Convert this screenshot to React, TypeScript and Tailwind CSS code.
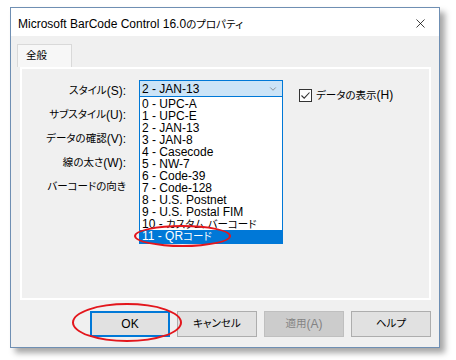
import { ChevronDown, X } from "lucide-react";

const ITEMS = [
  "0 - UPC-A",
  "1 - UPC-E",
  "2 - JAN-13",
  "3 - JAN-8",
  "4 - Casecode",
  "5 - NW-7",
  "6 - Code-39",
  "7 - Code-128",
  "8 - U.S. Postnet",
  "9 - U.S. Postal FIM",
  "10 - カスタム バーコード",
  "11 - QRコード",
];

const LABELS = ["スタイル(S):", "サブ スタイル(U):", "データの確認(V):", "線の太さ(W):", "バーコードの向き"];

// Japanese glyphs in the UI font are smaller than the Latin ones, so render CJK runs a bit smaller
function T({ s }: { s: string }) {
  const parts = s.split(/([\u3000-\u30ff\u4e00-\u9fff\uff00-\uffef]+)/);
  return (
    <>
      {parts.map((p, i) =>
        i % 2 === 1 ? (
          <span key={i} className="text-[10.5px]">
            {p}
          </span>
        ) : (
          p
        )
      )}
    </>
  );
}

function Button({ label, primary, disabled }: { label: string; primary?: boolean; disabled?: boolean }) {
  return (
    <div
      className={
        "w-[80px] h-[26px] flex items-center justify-center border " +
        (disabled
          ? "bg-[#cccccc] border-[#bfbfbf] text-[#838383]"
          : primary
          ? "bg-[#e1e1e1] border-[#0078d7] border-2 text-black"
          : "bg-[#e1e1e1] border-[#adadad] text-black")
      }
    >
      <T s={label} />
    </div>
  );
}

export default function App() {
  return (
    <div className="w-[456px] h-[360px] bg-white pt-[7px] pl-[10px] font-['Liberation_Sans','Noto_Sans_CJK_JP',sans-serif] text-[12px] text-black [font-feature-settings:'palt']">
      <div className="relative w-[430px] h-[341px] border border-[#6f8fb3] bg-[#f0f0f0] shadow-[5px_5px_6px_rgba(0,0,0,0.35)] flex flex-col">
        {/* title bar */}
        <div className="h-[28px] bg-white flex items-center justify-between pl-[7px] pr-[11px] pt-[3px]">
          <span className="text-[12px]">
            <T s="Microsoft BarCode Control 16.0のプロパティ" />
          </span>
          <X size={15} strokeWidth={1.2} />
        </div>

        {/* tabs */}
        <div className="mt-[8px] ml-[6px] flex">
          <div className="w-[55px] h-[23px] border border-b-0 border-[#d9d9d9] bg-[#f7f7f7] flex items-center pl-[8px]">
            <T s="全般" />
          </div>
        </div>

        {/* panel */}
        <div className="ml-[9px] mr-[8px] h-[233px] border-2 border-white bg-[#f0f0f0] relative">
          <div className="pt-[10px] flex flex-col">
            {LABELS.map((l, i) => (
              <div key={l} className="h-[24px] flex items-start">
                <div className="w-[104px] h-[24px] flex items-center justify-end">
                  <T s={l} />
                </div>
                {i === 0 && (
                  <div className="ml-[13px] mt-[1px] flex items-start">
                    <div className="relative">
                      <div className="w-[144px] h-[17px] bg-[#cce4f7] border border-[#0078d7] flex items-center justify-between pl-[2px] pr-[4px]">
                        <span>2 - JAN-13</span>
                        <ChevronDown size={10} strokeWidth={1.5} className="text-[#606060]" />
                      </div>
                      <div className="absolute left-0 top-[16px] w-[144px] h-[148px] bg-white border border-[#0078d7] z-10 flex flex-col pt-[1px]">
                        {ITEMS.map((it, j) => (
                          <div
                            key={it}
                            className={
                              "h-[12.1px] leading-[12px] pl-[2px] whitespace-nowrap " +
                              (j === 11 ? "bg-[#0078d7] text-white h-[13px]" : "")
                            }
                          >
                            <T s={it} />
                          </div>
                        ))}
                      </div>
                      <div className="absolute left-[-5px] top-[145px] w-[97px] h-[22px] rounded-[50%] border-2 border-[#e3161c] z-20" />
                    </div>
                    <div className="ml-[16px] mt-[6px] flex items-center gap-[4px]">
                      <div className="w-[13px] h-[13px] border border-[#333] bg-white flex items-center justify-center">
                        <svg width="11" height="11" viewBox="0 0 11 11">
                          <path d="M1.5 5.5 L4.2 8.2 L9.5 2.5" fill="none" stroke="#333" strokeWidth="1.1" />
                        </svg>
                      </div>
                      <span>
                        <T s="データの表示(H)" />
                      </span>
                    </div>
                  </div>
                )}
              </div>
            ))}
          </div>
        </div>

        {/* buttons */}
        <div className="mt-[11px] mr-[8px] flex justify-end gap-[7px] relative">
          <div className="relative">
            <Button label="OK" primary />
            <div className="absolute left-[-18px] top-[-8px] w-[110px] h-[39px] rounded-[50%] border-2 border-[#e3161c]" />
          </div>
          <Button label="キャンセル" />
          <Button label="適用(A)" disabled />
          <Button label="ヘルプ" />
        </div>
      </div>
    </div>
  );
}
